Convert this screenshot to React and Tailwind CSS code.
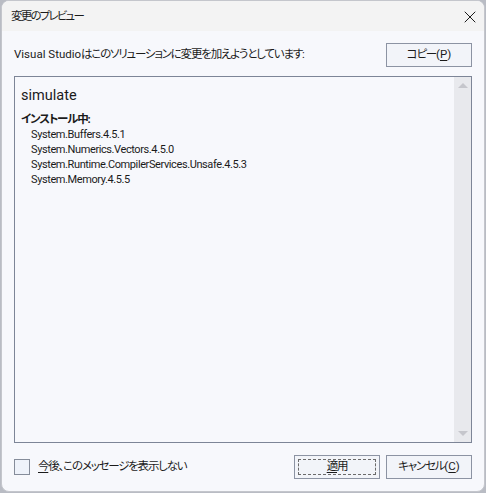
import { X } from 'lucide-react'

const FONT = { fontFamily: 'Roboto, "Noto Sans CJK JP", sans-serif' }

const PACKAGES = [
  'System.Buffers.4.5.1',
  'System.Numerics.Vectors.4.5.0',
  'System.Runtime.CompilerServices.Unsafe.4.5.3',
  'System.Memory.4.5.5',
]

// Japanese runs are narrower in the reference's UI font
function J({ children, className = '' }) {
  return <span className={`tracking-[-1.2px] ${className}`}>{children}</span>
}

function Button({ children, focused }) {
  return (
    <button className="relative w-[86px] h-[24px] border border-[#8c93a3] bg-[#f2f4f9] text-[11.5px] text-[#1b1b1b] flex items-center justify-center leading-none">
      {focused && <span className="absolute inset-[3px] border border-dashed border-[#6b6b6b]" />}
      <span className="relative">{children}</span>
    </button>
  )
}

export default function App() {
  return (
    <div className="w-[486px] h-[493px] bg-[#b9bcc4] pl-[1px] [font-feature-settings:'palt']" style={FONT}>
      <div className="w-[484px] h-[492px] rounded-[8px] border border-[#c4c6cc] overflow-hidden bg-[#f7f8fc] flex flex-col">
        <div className="h-[30px] bg-[#f3f3f3] flex items-center justify-between pl-[9px] pr-[4px] shrink-0">
          <span className="pt-[2px] text-[11.5px] text-[#1b1b1b] tracking-[-1.8px]">変更のプレビュー</span>
          <X size={20} strokeWidth={1.2} className="text-[#1b1b1b] mt-[1px]" />
        </div>

        <div className="flex-1 flex flex-col px-[12px] pt-[12px] pb-[12px]">
          <div className="flex items-center justify-between">
            <span className="text-[11.5px] text-[#1b1b1b]">
              Visual Studio<J>はこのソリューションに変更を加えようとしています:</J>
            </span>
            <Button>
              <J>コピー</J>(<span className="underline underline-offset-2">P</span>)
            </Button>
          </div>

          <div className="mt-[9px] flex-1 border border-[#7d8597] flex">
            <div className="flex-1 pl-[6px] pt-[7px] text-[#1b1b1b]">
              <div className="text-[14.5px] leading-[24px]">simulate</div>
              <div className="mt-[4px] text-[11.5px] font-bold leading-[15px]">
                <J>インストール中:</J>
              </div>
              <div className="pl-[10px] text-[11px] tracking-[-0.4px] leading-[15px]">
                {PACKAGES.map((p) => (
                  <div key={p} className="h-[15px]">{p}</div>
                ))}
              </div>
            </div>
            <div className="w-[17px] bg-[#e8e9ed] flex flex-col items-center justify-between py-[6px]">
              <div className="w-0 h-0 border-l-[5px] border-r-[5px] border-b-[5px] border-l-transparent border-r-transparent border-b-[#c5c6cc]" />
              <div className="w-0 h-0 border-l-[5px] border-r-[5px] border-t-[5px] border-l-transparent border-r-transparent border-t-[#c5c6cc]" />
            </div>
          </div>

          <div className="mt-[12px] flex items-center">
            <span className="w-[16px] h-[16px] border border-[#858c9a] bg-[#eef2fa]" />
            <J className="ml-[8px] text-[11.5px] text-[#1b1b1b] flex-1">
              <span className="underline underline-offset-2">今</span>後、このメッセージを表示しない
            </J>
            <Button focused>
              <J>
                <span className="underline underline-offset-2">適</span>用
              </J>
            </Button>
            <span className="w-[6px]" />
            <Button>
              <J>キャンセル</J>(<span className="underline underline-offset-2">C</span>)
            </Button>
          </div>
        </div>
      </div>
    </div>
  )
}
